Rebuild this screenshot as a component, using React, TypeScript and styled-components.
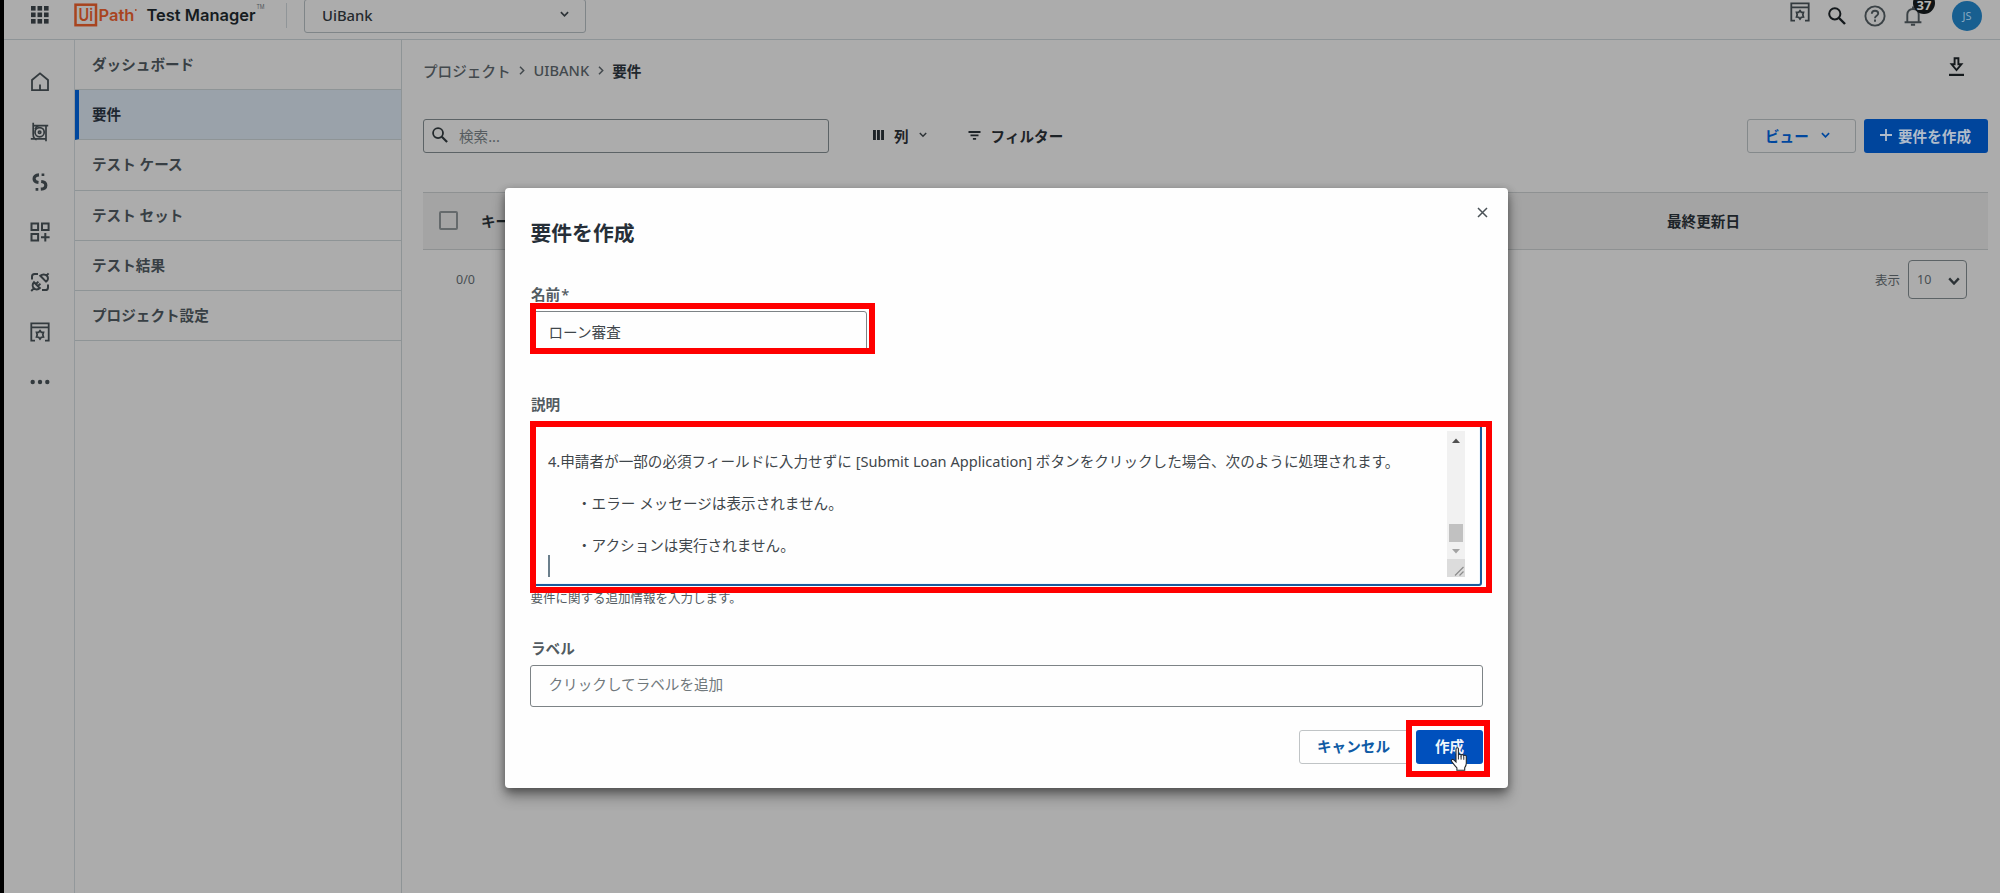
import React from "react";
import styled, { createGlobalStyle } from "styled-components";

const GlobalStyle = createGlobalStyle`
  * { box-sizing: border-box; }
  html, body { margin: 0; padding: 0; }
  body {
    background: #acacac;
    font-family: "Noto Sans", "Noto Sans CJK JP", sans-serif;
    font-size: 14.6px;
    color: #3a4145;
    overflow: hidden;
  }
`;

const Page = styled.div`
  position: relative;
  width: 2000px;
  height: 893px;
  overflow: hidden;
  display: flex;
  flex-direction: column;
  border-left: 4px solid #000;
  background: #acacac;
`;

/* ---------- header ---------- */

const Header = styled.header`
  flex: none;
  height: 48px;
  margin-top: -8px;
  display: flex;
  align-items: center;
  border-bottom: 1px solid #8e9497;
`;

const AppsIcon = styled.svg`
  margin-left: 27px;
  margin-top: -1px;
  flex: none;
`;

const Logo = styled.svg`
  margin-left: 25px;
  flex: none;
`;

const Divider = styled.div`
  width: 1px;
  height: 25px;
  margin-left: 18px;
  background: #909598;
`;

const ProjectSelect = styled.div`
  width: 282px;
  height: 34px;
  margin-left: 17px;
  padding: 0 16px 2px 17px;
  display: flex;
  align-items: center;
  justify-content: space-between;
  border: 1.5px solid #7f8588;
  border-radius: 3px;
  font-weight: 500;
  font-size: 14.8px;
  color: #24292d;
`;

const HeaderActions = styled.div`
  margin-left: auto;
  display: flex;
  align-items: center;
  padding-right: 18px;
`;

const HeaderIcon = styled.div<{ $gap?: number; $lift?: number }>`
  display: flex;
  position: relative;
  margin-left: ${(p) => p.$gap ?? 0}px;
  margin-bottom: ${(p) => p.$lift ?? 0}px;
`;

const Badge = styled.div`
  position: absolute;
  left: 9px;
  top: -14px;
  width: 22px;
  height: 22px;
  padding-top: 8px;
  border-radius: 50%;
  background: #101416;
  color: #b4b4b4;
  font-size: 13px;
  font-weight: 700;
  line-height: 10px;
  text-align: center;
`;

const Avatar = styled.div`
  width: 30px;
  height: 30px;
  margin-left: 30px;
  border-radius: 50%;
  background: #185f90;
  color: #86a9c0;
  font-size: 11px;
  line-height: 30px;
  text-align: center;
`;

/* ---------- body ---------- */

const Body = styled.div`
  flex: 1;
  display: flex;
  min-height: 0;
`;

const Rail = styled.aside`
  width: 71px;
  flex: none;
  display: flex;
  flex-direction: column;
  align-items: center;
  padding: 17px 0 0 1px;
  border-right: 1px solid #93989b;
`;

const RailItem = styled.div`
  height: 50px;
  display: flex;
  align-items: center;
  justify-content: center;
`;

const Nav = styled.nav`
  width: 327px;
  flex: none;
  border-right: 1px solid #8e9496;
`;

const NavItem = styled.div<{ $active?: boolean }>`
  height: 50.2px;
  padding-left: ${(p) => (p.$active ? 13 : 17)}px;
  padding-bottom: 2px;
  display: flex;
  align-items: center;
  border-bottom: 1px solid #8e9496;
  border-left: ${(p) => (p.$active ? "4px solid #00479e" : "none")};
  background: ${(p) => (p.$active ? "#9aa2aa" : "transparent")};
  color: ${(p) => (p.$active ? "#1d2630" : "#383f44")};
  font-weight: 700;
`;

const Main = styled.main`
  flex: 1;
  display: flex;
  flex-direction: column;
  padding: 0 12px 0 21px;
`;

const TopRow = styled.div`
  height: 54px;
  margin-top: 3px;
  display: flex;
  align-items: center;
  justify-content: space-between;
  padding-right: 24px;
`;

const DownloadIcon = styled.svg`
  margin-bottom: 6px;
`;

const Crumbs = styled.div`
  display: flex;
  align-items: center;
  gap: 8.5px;
  color: #43494d;
`;

const Crumb = styled.span<{ $current?: boolean }>`
  font-weight: ${(p) => (p.$current ? 700 : 500)};
  color: ${(p) => (p.$current ? "#1f272d" : "inherit")};
`;

const Toolbar = styled.div`
  height: 34px;
  margin-top: 22px;
  display: flex;
  align-items: center;
`;

const SearchBox = styled.div`
  width: 406px;
  height: 34px;
  padding: 0 0 2px 8px;
  display: flex;
  align-items: center;
  gap: 11px;
  border: 1.5px solid #5c6366;
  border-radius: 3px;
  color: #565c60;
`;

const ToolButton = styled.div<{ $gap: number }>`
  margin-left: ${(p) => p.$gap}px;
  padding-bottom: 2px;
  display: flex;
  align-items: center;
  gap: 10px;
  color: #1d2327;
  font-weight: 700;
`;

const OutlineButton = styled.div`
  width: 109px;
  height: 34px;
  margin-left: auto;
  padding: 0 0 2px 17px;
  display: flex;
  align-items: center;
  gap: 12px;
  border: 1.5px solid #84898b;
  border-radius: 3px;
  color: #00479e;
  font-weight: 700;
`;

const CreateButton = styled.div`
  width: 124px;
  height: 34px;
  margin-left: 8px;
  padding: 0 0 2px 16px;
  display: flex;
  align-items: center;
  gap: 6px;
  border-radius: 3px;
  background: #00459c;
  color: #b0bccb;
  font-weight: 700;
`;

const TableHead = styled.div`
  height: 58px;
  margin-top: 38.5px;
  padding-bottom: 1px;
  display: flex;
  align-items: center;
  border-top: 1px solid #8e9192;
  border-bottom: 1px solid #8e9192;
  background: #a4a4a4;
  color: #1d2429;
  font-weight: 700;
`;

const Checkbox = styled.div`
  width: 19px;
  height: 19px;
  margin-left: 15.5px;
  border: 2px solid #656a6c;
  border-radius: 2px;
`;

const HeadCell = styled.div<{ $gap: number }>`
  width: 100px;
  margin-left: ${(p) => p.$gap}px;
`;

const Pager = styled.div`
  height: 59px;
  display: flex;
  align-items: center;
  justify-content: space-between;
  padding: 0 21px 0 33px;
  font-size: 12.5px;
  color: #484e52;
`;

const PageSize = styled.div`
  display: flex;
  align-items: center;
  gap: 8px;
`;

const PageSelect = styled.div`
  width: 59px;
  height: 39px;
  padding: 0 6px 0 8px;
  display: flex;
  align-items: center;
  justify-content: space-between;
  border: 1.5px solid #5c6366;
  border-radius: 4px;

  svg { margin-top: 4px; }
`;

/* ---------- dialog ---------- */

const DialogLayer = styled.div`
  position: absolute;
  inset: 0;
  padding: 188px 0 0 501px;
`;

const Dialog = styled.section`
  position: relative;
  width: 1003px;
  height: 600px;
  padding: 31px 25px 0 25px;
  display: flex;
  flex-direction: column;
  border-radius: 4px;
  background: #fefefe;
  box-shadow: 0 9px 14px rgba(0, 0, 0, 0.3), 0 3px 9px rgba(0, 0, 0, 0.38);
`;

const CloseButton = styled.div`
  position: absolute;
  top: 19px;
  right: 20px;
  display: flex;
`;

const Title = styled.h1`
  margin: 0;
  height: 28px;
  padding-left: 0.5px;
  line-height: 28px;
  font-size: 20.8px;
  font-weight: 700;
  color: #262f38;
`;

const Field = styled.div<{ $top: number }>`
  position: relative;
  margin-top: ${(p) => p.$top}px;
`;

const Label = styled.div`
  height: 22px;
  margin-bottom: 5px;
  padding-left: 1px;
  line-height: 21px;
  font-weight: 700;
  color: #525b61;
`;

const Star = styled.span`
  font-weight: 500;
  margin-left: 1px;
`;

const Input = styled.div<{ $width?: string; $placeholder?: boolean }>`
  width: ${(p) => p.$width ?? "100%"};
  height: 42px;
  padding-left: 17.5px;
  line-height: ${(p) => (p.$placeholder ? 37 : 40)}px;
  border: 1.5px solid #7d8386;
  border-radius: 3px;
  color: ${(p) => (p.$placeholder ? "#70787c" : "#3f464b")};
`;

const TextArea = styled.div`
  width: 952px;
  height: 165px;
  display: flex;
  justify-content: space-between;
  border: 2px solid #1a5c9c;
  border-radius: 3px;
  box-shadow: inset 0 0 1px #67b7ee;
  padding: 8px 15px 0 16px;
  color: #3f464b;
`;

const Lines = styled.div`
  padding-top: 20px;
  line-height: 21px;
  white-space: pre;
`;

const Line = styled.div<{ $indent?: boolean }>`
  height: 42px;
  padding-left: ${(p) => (p.$indent ? 29 : 0)}px;
`;

const Caret = styled.div`
  width: 1.5px;
  height: 22px;
  margin-top: -22px;
  background: #6b7f8c;
`;

const Scrollbar = styled.div`
  width: 18px;
  height: 146px;
  display: flex;
  flex-direction: column;
  align-items: center;
  background: #f1f1f1;
`;

const ScrollArrow = styled.svg`
  flex: none;
  width: 8px;
  height: 5px;
  margin-top: 7px;
`;

const Thumb = styled.div`
  width: 14px;
  height: 18px;
  margin-top: 81px;
  background: #c1c1c1;
`;

const Grip = styled.svg`
  flex: none;
  width: 18px;
  height: 18px;
  margin-top: auto;
  background: #dcdcdc;
`;

const Hint = styled.div`
  height: 18px;
  margin-top: 4px;
  padding-left: 0.5px;
  line-height: 18px;
  font-size: 12.5px;
  color: #525b61;
`;

const Actions = styled.div`
  position: relative;
  margin-top: 23px;
  display: flex;
  justify-content: flex-end;
  gap: 7px;
`;

const CancelButton = styled.div`
  width: 110px;
  height: 34px;
  padding-left: 17px;
  line-height: 30px;
  border: 1.5px solid #c0c4c6;
  border-radius: 3px;
  font-weight: 700;
  color: #0f5ba5;
`;

const SubmitButton = styled.div`
  width: 67px;
  height: 34px;
  border-radius: 3px;
  background: #0050bd;
  color: #f1f6fb;
  line-height: 33px;
  text-align: center;
  font-weight: 700;
`;

const Highlight = styled.div<{ $x: number; $y: number; $w: number; $h: number }>`
  position: absolute;
  left: ${(p) => p.$x}px;
  top: ${(p) => p.$y}px;
  width: ${(p) => p.$w}px;
  height: ${(p) => p.$h}px;
  border: 6px solid #ff0000;
  z-index: 2;
`;

const Pointer = styled.svg`
  position: absolute;
  right: 13px;
  top: 17px;
  z-index: 3;
`;

/* ---------- icons ---------- */

const Chevron = ({ size = 9, stroke = 1.8, color = "#2c3236" }: { size?: number; stroke?: number; color?: string }) => (
  <svg width={size} height={size * 0.7} viewBox="0 0 10 7" fill="none" stroke={color} strokeWidth={stroke}>
    <path d="M1 1.2 5 5.4 9 1.2" />
  </svg>
);

const SearchIcon = ({ size, color = "#23292c" }: { size: number; color?: string }) => (
  <svg width={size} height={size} viewBox="0 0 18 18" fill="none" stroke={color} strokeWidth="2">
    <circle cx="6.8" cy="6.8" r="5.6" />
    <path d="m11 11 6 6" strokeWidth="2.4" />
  </svg>
);

const PanelGear = () => (
  <svg width="20" height="20" viewBox="0 0 20 20" fill="none" stroke="#333a3e" strokeWidth="1.800">
    <path d="M5 18.600H1.300V1.300h17.400v17.300H15M1.300 5.400h17.400" />
    <path d="M10 8.600l1.300 1.700 2.200.1-.7 2.300.7 2.300-2.200.2L10 17l-1.300-1.800-2.200-.2.700-2.300-.7-2.300 2.200-.1z" strokeWidth="1.700" />
  </svg>
);

const railProps = { width: 20, height: 20, viewBox: "0 0 20 20", fill: "none", stroke: "#333a3e", strokeWidth: 1.8 };

const HomeIcon = () => (
  <svg {...railProps}>
    <path d="M2 18.2V8l8-6.600L18 8v10.200H2zM10 12.600v5" />
  </svg>
);

const ObjectIcon = () => (
  <svg {...railProps} strokeWidth={1.7}>
    <path d="M3.200.8v11.400c0 2.600.9 4.700 3.400 5.500M.8 16.900h15M4 3.600h14.200M16 3v16.200M5 7.200C5.600 5.600 7 4.400 8.600 3.800" />
    <circle cx="9.600" cy="10.200" r="4.600" />
    <circle cx="9.600" cy="10.200" r="1.200" />
  </svg>
);

const LoopIcon = () => (
  <svg {...railProps} strokeWidth={3.2}>
    <path d="M9 2.800C5.500 3 4 5 4.100 6.900c.1 2 1.500 3.300 4.400 3.600" />
    <path d="M10.800 17.200c3.400-.2 5-2 5-4 0-2.100-1.500-3.400-4.600-3.700" />
    <path d="M11.600 2.700h2.700M5.600 17.400h2.700" strokeWidth="2.600" />
  </svg>
);

const TilesIcon = () => (
  <svg {...railProps} strokeWidth={2}>
    <path d="M1.500 1.500h6.600v6.600H1.500zM12 1.500h6.600v6.600H12zM1.500 12h6.600v6.600H1.500zM15.300 11v8.600M11 15.300h8.600" />
  </svg>
);

const PlugIcon = () => (
  <svg {...railProps} strokeWidth={2}>
    <path d="M2 7.400V4.600C2 3 3 2 4.600 2H8M18 12.600v2.800c0 1.600-1 2.600-2.600 2.600H12" />
    <path d="M10.300 3.800 16 9.600c2.300-1.300 2.600-4 .9-5.800-1.700-1.800-4.600-1.900-6.600 0zM16.400 3.600l2.200-2.200" />
    <path d="m4 10.200 5.800 5.800c-1.700 1.900-4.300 1.900-5.900.3-1.600-1.600-1.700-4.200.1-6.100zM1.200 19l2.400-2.400M6 12l2.400-2.400M8 14l2.400-2.400" />
  </svg>
);

const DotsIcon = () => (
  <svg width="20" height="6" viewBox="0 0 20 6" fill="#333a3e">
    <circle cx="2.700" cy="3" r="2.200" />
    <circle cx="10" cy="3" r="2.200" />
    <circle cx="17.300" cy="3" r="2.200" />
  </svg>
);

const navItems = ["ダッシュボード", "要件", "テスト ケース", "テスト セット", "テスト結果", "プロジェクト設定"];
const railIcons = [HomeIcon, ObjectIcon, LoopIcon, TilesIcon, PlugIcon, PanelGear, DotsIcon];
const cells = [0, 6.5, 13];

export default function App() {
  return (
    <Page>
      <GlobalStyle />
      <Header>
        <AppsIcon width="18" height="18" viewBox="0 0 18 18" fill="#2b3135">
          {cells.map((y) => cells.map((x) => <rect key={`${x}-${y}`} x={x} y={y} width="4.6" height="4.6" />))}
        </AppsIcon>
        <Logo width="194" height="32" viewBox="0 0 194 32">
          <rect x="1.500" y="4.700" width="20.500" height="20.500" fill="none" stroke="#a8441f" strokeWidth="2.500" />
          <g fontFamily="Inter, sans-serif">
            <text x="4.500" y="21" fontSize="17" fontWeight="600" fill="#a8441f" textLength="14.500" lengthAdjust="spacingAndGlyphs">Ui</text>
            <text x="24.500" y="21" fontSize="16.500" fontWeight="600" fill="#a8441f" textLength="36" lengthAdjust="spacingAndGlyphs">Path</text>
            <text x="72.500" y="21" fontSize="16.500" fontWeight="600" fill="#161c21" textLength="109" lengthAdjust="spacingAndGlyphs">Test Manager</text>
            <text x="182.500" y="9" fontSize="6.500" fill="#50565a" textLength="8" lengthAdjust="spacingAndGlyphs">TM</text>
          </g>
          <circle cx="61.800" cy="10" r="0.900" fill="#a8441f" />
        </Logo>
        <Divider />
        <ProjectSelect>
          UiBank
          <Chevron />
        </ProjectSelect>
        <HeaderActions>
          <HeaderIcon $lift={7}><PanelGear /></HeaderIcon>
          <HeaderIcon $gap={18}><SearchIcon size={18} color="#14191c" /></HeaderIcon>
          <HeaderIcon $gap={18}>
            <svg width="22" height="22" viewBox="0 0 22 22" fill="none" stroke="#3b4246" strokeWidth="1.900">
              <circle cx="11" cy="11" r="9.600" />
              <path d="M7.800 8.700c.1-1.900 1.400-3 3.200-3s3.200 1.100 3.200 2.800c0 2.300-3.200 2.300-3.200 4.700M11 14.600v2.100" />
            </svg>
          </HeaderIcon>
          <HeaderIcon $gap={18}>
            <svg width="18" height="20" viewBox="0 0 18 20" fill="none" stroke="#3b4246" strokeWidth="1.900">
              <path d="M.6 16.200h16.800M3.300 16V8.400C3.300 5.200 5.700 3 9 3s5.700 2.200 5.700 5.400V16M9 .6V3M6.900 18.800h4.200" />
            </svg>
            <Badge>37</Badge>
          </HeaderIcon>
          <Avatar>JS</Avatar>
        </HeaderActions>
      </Header>

      <Body>
        <Rail>
          {railIcons.map((Icon, i) => (
            <RailItem key={i}><Icon /></RailItem>
          ))}
        </Rail>
        <Nav>
          {navItems.map((label, i) => (
            <NavItem key={label} $active={i === 1}>{label}</NavItem>
          ))}
        </Nav>
        <Main>
          <TopRow>
            <Crumbs>
              <Crumb>プロジェクト</Crumb>
              <svg width="6" height="9" viewBox="0 0 6 9" fill="none" stroke="#43494d" strokeWidth="1.500">
                <path d="m1 .8 3.700 3.700L1 8.200" />
              </svg>
              <Crumb>UIBANK</Crumb>
              <svg width="6" height="9" viewBox="0 0 6 9" fill="none" stroke="#43494d" strokeWidth="1.500">
                <path d="m1 .8 3.700 3.700L1 8.200" />
              </svg>
              <Crumb $current>要件</Crumb>
            </Crumbs>
            <DownloadIcon width="15" height="20" viewBox="0 0 15 20" fill="none" stroke="#14191c" strokeWidth="1.900">
              <path d="M5.600 1.300h3.800v6h3L7.500 13 2.600 7.300h3z" />
              <path d="M0 17.900h15" strokeWidth="2.200" />
            </DownloadIcon>
          </TopRow>
          <Toolbar>
            <SearchBox>
              <SearchIcon size={16} />
              検索...
            </SearchBox>
            <ToolButton $gap={44}>
              <svg width="11" height="10" viewBox="0 0 11 10" fill="#1d2327">
                <path d="M0 0h2.900v10H0zM4 0h2.900v10H4zM8.100 0H11v10H8.100z" />
              </svg>
              列
              <Chevron size={8} />
            </ToolButton>
            <ToolButton $gap={41}>
              <svg width="13" height="9" viewBox="0 0 13 9" fill="#1d2327">
                <path d="M.5 0h12v1.900H.5zM2.500 3.500h8v1.700h-8zM4.900 7h3.200v1.800H4.900z" />
              </svg>
              フィルター
            </ToolButton>
            <OutlineButton>
              ビュー
              <Chevron size={9} color="#00479e" />
            </OutlineButton>
            <CreateButton>
              <svg width="12" height="12" viewBox="0 0 12 12" stroke="#b0bccb" strokeWidth="1.800">
                <path d="M6 0v12M0 6h12" />
              </svg>
              要件を作成
            </CreateButton>
          </Toolbar>
          <TableHead>
            <Checkbox />
            <HeadCell $gap={23.5}>キー</HeadCell>
            <HeadCell $gap={1086}>最終更新日</HeadCell>
          </TableHead>
          <Pager>
            <span>0/0</span>
            <PageSize>
              表示
              <PageSelect>
                10
                <Chevron size={12} stroke={2} />
              </PageSelect>
            </PageSize>
          </Pager>
        </Main>
      </Body>

      <DialogLayer>
        <Dialog>
          <CloseButton>
            <svg width="11" height="11" viewBox="0 0 11 11" stroke="#4a5257" strokeWidth="1.500">
              <path d="m1 1 9 9M10 1l-9 9" />
            </svg>
          </CloseButton>
          <Title>要件を作成</Title>
          <Field $top={37}>
            <Label>名前<Star>*</Star></Label>
            <Input $width="337px">ローン審査</Input>
            <Highlight $x={0} $y={19} $w={345} $h={51} />
          </Field>
          <Field $top={41}>
            <Label>説明</Label>
            <TextArea>
              <Lines>
                <Line>4.申請者が一部の必須フィールドに入力せずに [Submit Loan Application] ボタンをクリックした場合、次のように処理されます。</Line>
                <Line $indent>・エラー メッセージは表示されません。</Line>
                <Line $indent>・アクションは実行されません。</Line>
                <Caret />
              </Lines>
              <Scrollbar>
                <ScrollArrow viewBox="0 0 8 5"><path d="M0 5 4 .6 8 5z" fill="#505050" /></ScrollArrow>
                <Thumb />
                <ScrollArrow viewBox="0 0 8 5"><path d="M0 0 4 4.400 8 0z" fill="#a3a3a3" /></ScrollArrow>
                <Grip viewBox="0 0 18 18" stroke="#8c8c8c" strokeWidth="1.200">
                  <path d="m8 16.500 8.500-8.500M12.500 16.500l4-4" />
                </Grip>
              </Scrollbar>
            </TextArea>
            <Hint>要件に関する追加情報を入力します。</Hint>
            <Highlight $x={0} $y={27} $w={962} $h={172} />
          </Field>
          <Field $top={30}>
            <Label>ラベル</Label>
            <Input $placeholder>クリックしてラベルを追加</Input>
          </Field>
          <Actions>
            <CancelButton>キャンセル</CancelButton>
            <SubmitButton>作成</SubmitButton>
            <Highlight $x={876} $y={-10} $w={84} $h={57} />
            <Pointer width="20" height="26" viewBox="0 0 20 26">
              <path
                d="M6 1.800c0-1.400 2.400-1.400 2.400 0v6.400c.3-1.300 2.500-1.200 2.700.2.500-1.200 2.500-1 2.700.4.600-1 2.500-.8 2.500 1v6.400c0 2-.8 3.300-1.600 4.600v2.400H6.900v-2.300c-2-1.900-3.600-4.200-5.300-6.600-.8-1.300.8-2.600 2.200-1.400L6 15z"
                fill="#fff"
                stroke="#23272b"
                strokeWidth="1.100"
              />
              <path d="M8.400 8v4.500M11.100 9v3.600M13.800 9.600v3.200" stroke="#23272b" strokeWidth="1" />
            </Pointer>
          </Actions>
        </Dialog>
      </DialogLayer>
    </Page>
  );
}
